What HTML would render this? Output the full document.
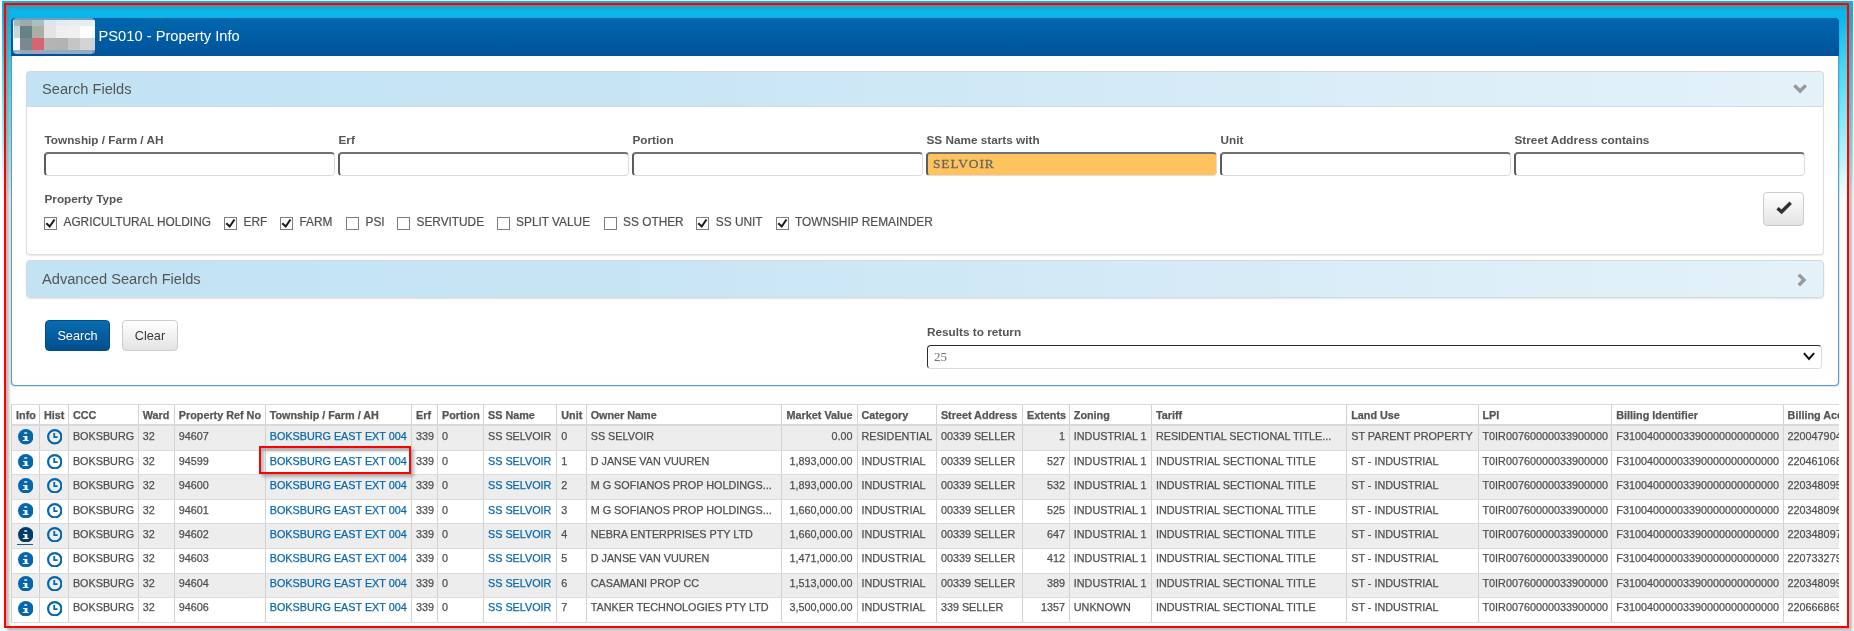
<!DOCTYPE html>
<html lang="en">
<head>
<meta charset="utf-8">
<title>PS010 - Property Info</title>
<style>
*{box-sizing:border-box}
html,body{margin:0;padding:0}
body{width:1854px;height:631px;overflow:hidden;background:#fff;position:relative;
 font-family:"Liberation Sans",Arial,sans-serif;font-size:11.72px;color:#4d4d4d}
.abs{position:absolute}
#root{position:absolute;left:0;top:0;width:1854px;height:631px;overflow:hidden;will-change:transform}
#bg{left:2px;top:1px;width:1851px;height:200px;
 background:linear-gradient(to bottom,#06b4e9 0px,#0cb8ea 17px,#40d4f0 60px,#5ae3f3 85px,#b5f2fa 155px,#fff 199px)}
.frame{border:2px solid #ff0000;box-shadow:3px 3px 3px rgba(120,120,120,.52),inset 3px 3px 3px rgba(120,120,120,.52);pointer-events:none}
#frame{left:4px;top:3px;width:1845px;height:625px;z-index:50}
#hl{left:259px;top:446px;width:152px;height:28px;z-index:51}
#main{left:11px;top:18px;width:1828px;height:368px;background:#fff;border:1px solid #5b9bcb;border-radius:4px;
 box-shadow:0 0 1.5px rgba(60,130,190,.9)}
#hdr{left:11px;top:18px;width:1828px;height:38px;border-radius:4px 4px 0 0;
 background:linear-gradient(to bottom,#0068ad 0%,#005fa6 45%,#00539a 100%)}
#logo{left:13px;top:18px;width:82px;height:36px;border-radius:4px;overflow:hidden}
#logo i{position:absolute;display:block}
#title{left:98.5px;top:17px;height:38px;line-height:38px;color:#fff;font-size:14.7px;white-space:nowrap}
.ph{left:26px;width:1798px;height:36px;border:1px solid #d3d9dd;border-radius:4px 4px 0 0;
 background:linear-gradient(to right,#c2e3f4 0%,#c8e5f5 35%,#d6ebf7 65%,#e4f2f9 100%);box-shadow:0 0 1px rgba(0,0,0,.12)}
.ph span{position:absolute;left:15px;top:0;line-height:35px;font-size:14.65px;color:#555;white-space:nowrap}
.ph svg{position:absolute}
#pb1{left:26px;top:107px;width:1798px;height:148px;border:1px solid #dedede;border-top:0;border-radius:0 0 4px 4px;
 background:#fff;box-shadow:0 1px 1px rgba(0,0,0,.08)}
.lbl{font-weight:bold;font-size:11.78px;color:#555;white-space:nowrap;line-height:14px}
.inp{height:24px;width:291px;border-style:solid;border-width:2px 1px 1px 2px;border-color:#727272 #e2d9d9 #e2dada #5c5c5c;border-radius:4px;background:#fff}
.inp.sel{background:#fec25f}
.inp.sel span{position:absolute;left:5px;top:0;line-height:20px;font-family:"Liberation Serif","Times New Roman",serif;font-size:13.4px;letter-spacing:.9px;color:#6a665e;-webkit-text-stroke:.3px}
.cb{width:13px;height:13px;border:1px solid #7d7d7d;background:#fff}
.cb svg{position:absolute;left:-1px;top:-1px;width:13px;height:13px}
.cbl{font-size:11.85px;color:#505050;-webkit-text-stroke:.2px;white-space:nowrap;line-height:14px}
.btn{border-radius:4px;text-align:center;font-size:12.7px;white-space:nowrap}
#bsearch{left:45px;top:320px;width:65px;height:31px;line-height:30px;color:#fff;text-shadow:0 -1px 0 rgba(0,0,0,.2);border:1px solid #004a86;
 background:linear-gradient(to bottom,#0a6cb0 0%,#004f8f 100%)}
#bclear{left:122px;top:320px;width:56px;height:31px;line-height:30px;color:#3a3a3a;border:1px solid #ccc;
 background:linear-gradient(to bottom,#fff 0%,#e3e3e3 100%)}
#bcheck{left:1763px;top:192px;width:41px;height:34px;border:1px solid #ccc;background:linear-gradient(to bottom,#fff 0%,#e3e3e3 100%)}
#selr{left:927px;top:345px;width:895px;height:24px;border:1px solid;border-color:#2a2a2a #e2d9d9 #e2dada #2a2a2a;border-radius:4px;background:#fff}
#selr span{position:absolute;left:6px;top:0;line-height:22px;font-family:"Liberation Serif","Times New Roman",serif;font-size:13px;color:#707070}
/* table */
#tbl{left:11px;top:404px;width:1828px;height:222px;overflow:hidden;font-size:10.8px;color:#505050;-webkit-text-stroke:.25px}
.tr{position:absolute;left:0;width:1900px;border-top:1px solid #dcdcdc;background:#fff;line-height:19.5px}
.tr.odd{background:#ededed}
.tr.first{border-top:2px solid #d9d9d9;line-height:21.5px}
.tr.th{font-weight:bold;color:#555;line-height:20.4px}
.c{position:absolute;top:0;height:100%;border-left:1px solid #d2d2d2;white-space:nowrap;overflow:hidden}
.c.r{text-align:right}
.c.i{padding:0 !important}
.c a{color:#0a69b0}
.ic{position:absolute;top:2.75px;width:15.5px;height:15.5px}
.first .ic{top:3.1px}
.hov{position:absolute;left:50%;margin-left:-8.7px;width:16px;top:20px;height:1px;background:#2a587d}
#tblend{left:11px;top:622px;width:1828px;height:1px;background:#dcdcdc}
</style>
</head>
<body>
<div id="root">
<div id="bg" class="abs"></div>
<div id="main" class="abs"></div>
<div id="hdr" class="abs"></div>
<div id="logo" class="abs">
<i style="left:0px;top:0px;width:1px;height:2px;background:#7fa9cc"></i>
<i style="left:1px;top:0px;width:6px;height:2px;background:#6c9fc8"></i>
<i style="left:7px;top:0px;width:12px;height:2px;background:#6c9fc8"></i>
<i style="left:19px;top:0px;width:12px;height:2px;background:#6c9fc8"></i>
<i style="left:31px;top:0px;width:12px;height:2px;background:#6c9fc8"></i>
<i style="left:43px;top:0px;width:12px;height:2px;background:#6c9fc8"></i>
<i style="left:55px;top:0px;width:12px;height:2px;background:#6c9fc8"></i>
<i style="left:67px;top:0px;width:12px;height:2px;background:#6c9fc8"></i>
<i style="left:79px;top:0px;width:3px;height:2px;background:#5f95c2"></i>
<i style="left:0px;top:2px;width:1px;height:6px;background:#e9efef"></i>
<i style="left:1px;top:2px;width:6px;height:6px;background:#a0bdb9"></i>
<i style="left:7px;top:2px;width:12px;height:6px;background:#9fa9ae"></i>
<i style="left:19px;top:2px;width:12px;height:6px;background:#a9c1bd"></i>
<i style="left:31px;top:2px;width:12px;height:6px;background:#dae6ee"></i>
<i style="left:43px;top:2px;width:12px;height:6px;background:#e4ecf3"></i>
<i style="left:55px;top:2px;width:12px;height:6px;background:#e6eef4"></i>
<i style="left:67px;top:2px;width:12px;height:6px;background:#e6eef4"></i>
<i style="left:79px;top:2px;width:3px;height:6px;background:#e9eff6"></i>
<i style="left:0px;top:8px;width:1px;height:12px;background:#f4f6f6"></i>
<i style="left:1px;top:8px;width:6px;height:12px;background:#cad7d8"></i>
<i style="left:7px;top:8px;width:12px;height:12px;background:#688186"></i>
<i style="left:19px;top:8px;width:12px;height:12px;background:#aaaea4"></i>
<i style="left:31px;top:8px;width:12px;height:12px;background:#e4e4e4"></i>
<i style="left:43px;top:8px;width:12px;height:12px;background:#efefef"></i>
<i style="left:55px;top:8px;width:12px;height:12px;background:#f0f0f0"></i>
<i style="left:67px;top:8px;width:12px;height:12px;background:#fefefe"></i>
<i style="left:79px;top:8px;width:3px;height:12px;background:#f8f9fc"></i>
<i style="left:0px;top:20px;width:1px;height:12px;background:#fbfcfd"></i>
<i style="left:1px;top:20px;width:6px;height:12px;background:#f8f9fc"></i>
<i style="left:7px;top:20px;width:12px;height:12px;background:#788990"></i>
<i style="left:19px;top:20px;width:12px;height:12px;background:#d36672"></i>
<i style="left:31px;top:20px;width:12px;height:12px;background:#b4b4b4"></i>
<i style="left:43px;top:20px;width:12px;height:12px;background:#b3b3b3"></i>
<i style="left:55px;top:20px;width:12px;height:12px;background:#c5c5c5"></i>
<i style="left:67px;top:20px;width:12px;height:12px;background:#d4d4d4"></i>
<i style="left:79px;top:20px;width:3px;height:12px;background:#cdd3d8"></i>
<i style="left:0px;top:32px;width:1px;height:4px;background:#9fb4c6"></i>
<i style="left:1px;top:32px;width:6px;height:4px;background:#a3b7c8"></i>
<i style="left:7px;top:32px;width:12px;height:4px;background:#94a9b8"></i>
<i style="left:19px;top:32px;width:12px;height:4px;background:#a7a4b4"></i>
<i style="left:31px;top:32px;width:12px;height:4px;background:#94acc0"></i>
<i style="left:43px;top:32px;width:12px;height:4px;background:#94acc0"></i>
<i style="left:55px;top:32px;width:12px;height:4px;background:#94acc0"></i>
<i style="left:67px;top:32px;width:12px;height:4px;background:#94acc0"></i>
<i style="left:79px;top:32px;width:3px;height:4px;background:#7fa0bf"></i>
</div>
<div id="title" class="abs">PS010 - Property Info</div>

<div class="abs ph" style="top:71px"><span>Search Fields</span>
<svg style="left:-1px;top:-1px" width="1798" height="37" viewBox="0 0 1798 37"><path d="M1768.4 14.4L1774.1 20L1779.8 14.4" fill="none" stroke="#999" stroke-width="3.4"/></svg></div>
<div id="pb1" class="abs"></div>
<div class="abs ph" style="top:260px;height:38px;border-radius:4px;box-shadow:0 1px 2px rgba(0,0,0,.12)"><span style="line-height:37px">Advanced Search Fields</span>
<svg style="left:-1px;top:-1px" width="1798" height="37" viewBox="0 0 1798 37"><path d="M1772.8 14.6L1778 19.9L1772.8 25.2" fill="none" stroke="#999" stroke-width="3.4"/></svg></div>

<div class="abs lbl" style="left:44.5px;top:133px">Township / Farm / AH</div>
<div class="abs inp" style="left:44px;top:152px"></div>
<div class="abs lbl" style="left:338.5px;top:133px">Erf</div>
<div class="abs inp" style="left:338px;top:152px"></div>
<div class="abs lbl" style="left:632.5px;top:133px">Portion</div>
<div class="abs inp" style="left:632px;top:152px"></div>
<div class="abs lbl" style="left:926.5px;top:133px">SS Name starts with</div>
<div class="abs inp sel" style="left:926px;top:152px"><span>SELVOIR</span></div>
<div class="abs lbl" style="left:1220.5px;top:133px">Unit</div>
<div class="abs inp" style="left:1220px;top:152px"></div>
<div class="abs lbl" style="left:1514.5px;top:133px">Street Address contains</div>
<div class="abs inp" style="left:1514px;top:152px"></div>
<div class="abs lbl" style="left:44.5px;top:192px">Property Type</div>
<div class="abs cb" style="left:44px;top:217px"><svg viewBox="0 0 13 13"><path d="M2.3 6.2L5.7 9.5L10.5 2.5" fill="none" stroke="#1c1c1c" stroke-width="2.1"/></svg></div><div class="abs cbl" style="left:63.5px;top:215px">AGRICULTURAL HOLDING</div>
<div class="abs cb" style="left:224px;top:217px"><svg viewBox="0 0 13 13"><path d="M2.3 6.2L5.7 9.5L10.5 2.5" fill="none" stroke="#1c1c1c" stroke-width="2.1"/></svg></div><div class="abs cbl" style="left:243.5px;top:215px">ERF</div>
<div class="abs cb" style="left:280px;top:217px"><svg viewBox="0 0 13 13"><path d="M2.3 6.2L5.7 9.5L10.5 2.5" fill="none" stroke="#1c1c1c" stroke-width="2.1"/></svg></div><div class="abs cbl" style="left:299.5px;top:215px">FARM</div>
<div class="abs cb" style="left:346px;top:217px"></div><div class="abs cbl" style="left:365.5px;top:215px">PSI</div>
<div class="abs cb" style="left:397px;top:217px"></div><div class="abs cbl" style="left:416.5px;top:215px">SERVITUDE</div>
<div class="abs cb" style="left:496.6px;top:217px"></div><div class="abs cbl" style="left:516.1px;top:215px">SPLIT VALUE</div>
<div class="abs cb" style="left:603.6px;top:217px"></div><div class="abs cbl" style="left:623.1px;top:215px">SS OTHER</div>
<div class="abs cb" style="left:696.3px;top:217px"><svg viewBox="0 0 13 13"><path d="M2.3 6.2L5.7 9.5L10.5 2.5" fill="none" stroke="#1c1c1c" stroke-width="2.1"/></svg></div><div class="abs cbl" style="left:715.8px;top:215px">SS UNIT</div>
<div class="abs cb" style="left:775.5px;top:217px"><svg viewBox="0 0 13 13"><path d="M2.3 6.2L5.7 9.5L10.5 2.5" fill="none" stroke="#1c1c1c" stroke-width="2.1"/></svg></div><div class="abs cbl" style="left:795.0px;top:215px">TOWNSHIP REMAINDER</div>
<div id="bcheck" class="abs btn"><svg style="position:absolute;left:-1px;top:-1px" width="41" height="33" viewBox="0 0 41 33"><path d="M14.5 16.2L18.6 19.8L27.7 10.7" fill="none" stroke="#303030" stroke-width="3.4"/></svg></div>

<div id="bsearch" class="abs btn">Search</div>
<div id="bclear" class="abs btn">Clear</div>
<div class="abs lbl" style="left:927px;top:325px">Results to return</div>
<div id="selr" class="abs"><span>25</span>
<svg style="position:absolute;right:6.5px;top:6.3px" width="12" height="9" viewBox="0 0 12 9"><path d="M0.9 1.2L6 7L11.1 1.2" fill="none" stroke="#111" stroke-width="2"/></svg></div>

<div id="tbl" class="abs">
<div class="tr th" style="top:0px;height:20px">
<div class="c" style="left:0px;width:28px;padding-left:4.1px;padding-right:3.8px">Info</div>
<div class="c" style="left:28px;width:29px;padding-left:4.0px;padding-right:3.9px">Hist</div>
<div class="c" style="left:57px;width:70px;padding-left:3.9px;padding-right:4.0px">CCC</div>
<div class="c" style="left:127px;width:36px;padding-left:3.8px;padding-right:4.0px">Ward</div>
<div class="c" style="left:163px;width:91px;padding-left:3.8px;padding-right:4.1px">Property Ref No</div>
<div class="c" style="left:254px;width:146px;padding-left:3.7px;padding-right:3.7px">Township / Farm / AH</div>
<div class="c" style="left:400px;width:26px;padding-left:4.1px;padding-right:3.8px">Erf</div>
<div class="c" style="left:426px;width:46px;padding-left:4.0px;padding-right:3.8px">Portion</div>
<div class="c" style="left:472px;width:73px;padding-left:4.0px;padding-right:3.5px">SS Name</div>
<div class="c" style="left:545px;width:30px;padding-left:4.3px;padding-right:4.1px">Unit</div>
<div class="c" style="left:575px;width:195px;padding-left:3.7px;padding-right:3.8px">Owner Name</div>
<div class="c r" style="left:770px;width:76px;padding-left:4.0px;padding-right:4.4px">Market Value</div>
<div class="c" style="left:846px;width:79px;padding-left:3.4px;padding-right:3.9px">Category</div>
<div class="c" style="left:925px;width:86px;padding-left:3.9px;padding-right:3.8px">Street Address</div>
<div class="c r" style="left:1011px;width:47px;padding-left:4.0px;padding-right:4.0px">Extents</div>
<div class="c" style="left:1058px;width:82px;padding-left:3.8px;padding-right:3.9px">Zoning</div>
<div class="c" style="left:1140px;width:195px;padding-left:3.9px;padding-right:3.6px">Tariff</div>
<div class="c" style="left:1335px;width:132px;padding-left:4.2px;padding-right:4.3px">Land Use</div>
<div class="c" style="left:1467px;width:133px;padding-left:3.5px;padding-right:3.5px">LPI</div>
<div class="c" style="left:1600px;width:172px;padding-left:4.3px;padding-right:4.2px">Billing Identifier</div>
<div class="c" style="left:1772px;width:117px;padding-left:3.6px;padding-right:3.9px">Billing Account</div>
</div>
<div class="tr odd first" style="top:20px;height:26px">
<div class="c i" style="left:0px;width:28px;padding-left:4.1px;padding-right:3.8px"><svg class="ic" style="left:5.800000000000001px" viewBox="0 0 15.5 15.5"><circle cx="7.75" cy="7.75" r="7.75" fill="#0566ad"/><rect x="6.2" y="3.3" width="3.0" height="1.5" rx=".4" fill="#fff" fill-opacity=".92"/><path d="M5.0 7.0H9.4V11H10.6V12.1H4.7V11H6.6V8.1H5.0z" fill="#fff" fill-opacity=".95"/></svg></div>
<div class="c i" style="left:28px;width:29px;padding-left:4.0px;padding-right:3.9px"><svg class="ic" style="left:6.5px" viewBox="0 0 15.5 15.5"><circle cx="7.75" cy="7.75" r="6.65" fill="none" stroke="#0566ad" stroke-width="2.2"/><path d="M7.25 4.1V8.1H10.6" fill="none" stroke="#0566ad" stroke-width="1.8"/></svg></div>
<div class="c" style="left:57px;width:70px;padding-left:3.9px;padding-right:4.0px">BOKSBURG</div>
<div class="c" style="left:127px;width:36px;padding-left:3.8px;padding-right:4.0px">32</div>
<div class="c" style="left:163px;width:91px;padding-left:3.8px;padding-right:4.1px">94607</div>
<div class="c" style="left:254px;width:146px;padding-left:3.7px;padding-right:3.7px"><a>BOKSBURG EAST EXT 004</a></div>
<div class="c" style="left:400px;width:26px;padding-left:4.1px;padding-right:3.8px">339</div>
<div class="c" style="left:426px;width:46px;padding-left:4.0px;padding-right:3.8px">0</div>
<div class="c" style="left:472px;width:73px;padding-left:4.0px;padding-right:3.5px">SS SELVOIR</div>
<div class="c" style="left:545px;width:30px;padding-left:4.3px;padding-right:4.1px">0</div>
<div class="c" style="left:575px;width:195px;padding-left:3.7px;padding-right:3.8px">SS SELVOIR</div>
<div class="c r" style="left:770px;width:76px;padding-left:4.0px;padding-right:4.4px">0.00</div>
<div class="c" style="left:846px;width:79px;padding-left:3.4px;padding-right:3.9px">RESIDENTIAL</div>
<div class="c" style="left:925px;width:86px;padding-left:3.9px;padding-right:3.8px">00339 SELLER</div>
<div class="c r" style="left:1011px;width:47px;padding-left:4.0px;padding-right:4.0px">1</div>
<div class="c" style="left:1058px;width:82px;padding-left:3.8px;padding-right:3.9px">INDUSTRIAL 1</div>
<div class="c" style="left:1140px;width:195px;padding-left:3.9px;padding-right:3.6px">RESIDENTIAL SECTIONAL TITLE...</div>
<div class="c" style="left:1335px;width:132px;padding-left:4.2px;padding-right:4.3px">ST PARENT PROPERTY</div>
<div class="c" style="left:1467px;width:133px;padding-left:3.5px;padding-right:3.5px">T0IR00760000033900000</div>
<div class="c" style="left:1600px;width:172px;padding-left:4.3px;padding-right:4.2px">F31004000003390000000000000</div>
<div class="c" style="left:1772px;width:117px;padding-left:3.6px;padding-right:3.9px">2200479040</div>
</div>
<div class="tr" style="top:46px;height:24px;line-height:20.5px">
<div class="c i" style="left:0px;width:28px;padding-left:4.1px;padding-right:3.8px"><svg class="ic" style="left:5.800000000000001px" viewBox="0 0 15.5 15.5"><circle cx="7.75" cy="7.75" r="7.75" fill="#0566ad"/><rect x="6.2" y="3.3" width="3.0" height="1.5" rx=".4" fill="#fff" fill-opacity=".92"/><path d="M5.0 7.0H9.4V11H10.6V12.1H4.7V11H6.6V8.1H5.0z" fill="#fff" fill-opacity=".95"/></svg></div>
<div class="c i" style="left:28px;width:29px;padding-left:4.0px;padding-right:3.9px"><svg class="ic" style="left:6.5px" viewBox="0 0 15.5 15.5"><circle cx="7.75" cy="7.75" r="6.65" fill="none" stroke="#0566ad" stroke-width="2.2"/><path d="M7.25 4.1V8.1H10.6" fill="none" stroke="#0566ad" stroke-width="1.8"/></svg></div>
<div class="c" style="left:57px;width:70px;padding-left:3.9px;padding-right:4.0px">BOKSBURG</div>
<div class="c" style="left:127px;width:36px;padding-left:3.8px;padding-right:4.0px">32</div>
<div class="c" style="left:163px;width:91px;padding-left:3.8px;padding-right:4.1px">94599</div>
<div class="c" style="left:254px;width:146px;padding-left:3.7px;padding-right:3.7px"><a>BOKSBURG EAST EXT 004</a></div>
<div class="c" style="left:400px;width:26px;padding-left:4.1px;padding-right:3.8px">339</div>
<div class="c" style="left:426px;width:46px;padding-left:4.0px;padding-right:3.8px">0</div>
<div class="c" style="left:472px;width:73px;padding-left:4.0px;padding-right:3.5px"><a>SS SELVOIR</a></div>
<div class="c" style="left:545px;width:30px;padding-left:4.3px;padding-right:4.1px">1</div>
<div class="c" style="left:575px;width:195px;padding-left:3.7px;padding-right:3.8px">D JANSE VAN VUUREN</div>
<div class="c r" style="left:770px;width:76px;padding-left:4.0px;padding-right:4.4px">1,893,000.00</div>
<div class="c" style="left:846px;width:79px;padding-left:3.4px;padding-right:3.9px">INDUSTRIAL</div>
<div class="c" style="left:925px;width:86px;padding-left:3.9px;padding-right:3.8px">00339 SELLER</div>
<div class="c r" style="left:1011px;width:47px;padding-left:4.0px;padding-right:4.0px">527</div>
<div class="c" style="left:1058px;width:82px;padding-left:3.8px;padding-right:3.9px">INDUSTRIAL 1</div>
<div class="c" style="left:1140px;width:195px;padding-left:3.9px;padding-right:3.6px">INDUSTRIAL SECTIONAL TITLE</div>
<div class="c" style="left:1335px;width:132px;padding-left:4.2px;padding-right:4.3px">ST - INDUSTRIAL</div>
<div class="c" style="left:1467px;width:133px;padding-left:3.5px;padding-right:3.5px">T0IR00760000033900000</div>
<div class="c" style="left:1600px;width:172px;padding-left:4.3px;padding-right:4.2px">F31004000003390000000000000</div>
<div class="c" style="left:1772px;width:117px;padding-left:3.6px;padding-right:3.9px">2204610680</div>
</div>
<div class="tr odd" style="top:70px;height:25px;line-height:20.5px">
<div class="c i" style="left:0px;width:28px;padding-left:4.1px;padding-right:3.8px"><svg class="ic" style="left:5.800000000000001px" viewBox="0 0 15.5 15.5"><circle cx="7.75" cy="7.75" r="7.75" fill="#0566ad"/><rect x="6.2" y="3.3" width="3.0" height="1.5" rx=".4" fill="#fff" fill-opacity=".92"/><path d="M5.0 7.0H9.4V11H10.6V12.1H4.7V11H6.6V8.1H5.0z" fill="#fff" fill-opacity=".95"/></svg></div>
<div class="c i" style="left:28px;width:29px;padding-left:4.0px;padding-right:3.9px"><svg class="ic" style="left:6.5px" viewBox="0 0 15.5 15.5"><circle cx="7.75" cy="7.75" r="6.65" fill="none" stroke="#0566ad" stroke-width="2.2"/><path d="M7.25 4.1V8.1H10.6" fill="none" stroke="#0566ad" stroke-width="1.8"/></svg></div>
<div class="c" style="left:57px;width:70px;padding-left:3.9px;padding-right:4.0px">BOKSBURG</div>
<div class="c" style="left:127px;width:36px;padding-left:3.8px;padding-right:4.0px">32</div>
<div class="c" style="left:163px;width:91px;padding-left:3.8px;padding-right:4.1px">94600</div>
<div class="c" style="left:254px;width:146px;padding-left:3.7px;padding-right:3.7px"><a>BOKSBURG EAST EXT 004</a></div>
<div class="c" style="left:400px;width:26px;padding-left:4.1px;padding-right:3.8px">339</div>
<div class="c" style="left:426px;width:46px;padding-left:4.0px;padding-right:3.8px">0</div>
<div class="c" style="left:472px;width:73px;padding-left:4.0px;padding-right:3.5px"><a>SS SELVOIR</a></div>
<div class="c" style="left:545px;width:30px;padding-left:4.3px;padding-right:4.1px">2</div>
<div class="c" style="left:575px;width:195px;padding-left:3.7px;padding-right:3.8px">M G SOFIANOS PROP HOLDINGS...</div>
<div class="c r" style="left:770px;width:76px;padding-left:4.0px;padding-right:4.4px">1,893,000.00</div>
<div class="c" style="left:846px;width:79px;padding-left:3.4px;padding-right:3.9px">INDUSTRIAL</div>
<div class="c" style="left:925px;width:86px;padding-left:3.9px;padding-right:3.8px">00339 SELLER</div>
<div class="c r" style="left:1011px;width:47px;padding-left:4.0px;padding-right:4.0px">532</div>
<div class="c" style="left:1058px;width:82px;padding-left:3.8px;padding-right:3.9px">INDUSTRIAL 1</div>
<div class="c" style="left:1140px;width:195px;padding-left:3.9px;padding-right:3.6px">INDUSTRIAL SECTIONAL TITLE</div>
<div class="c" style="left:1335px;width:132px;padding-left:4.2px;padding-right:4.3px">ST - INDUSTRIAL</div>
<div class="c" style="left:1467px;width:133px;padding-left:3.5px;padding-right:3.5px">T0IR00760000033900000</div>
<div class="c" style="left:1600px;width:172px;padding-left:4.3px;padding-right:4.2px">F31004000003390000000000000</div>
<div class="c" style="left:1772px;width:117px;padding-left:3.6px;padding-right:3.9px">2203480950</div>
</div>
<div class="tr" style="top:95px;height:24px;line-height:20.5px">
<div class="c i" style="left:0px;width:28px;padding-left:4.1px;padding-right:3.8px"><svg class="ic" style="left:5.800000000000001px" viewBox="0 0 15.5 15.5"><circle cx="7.75" cy="7.75" r="7.75" fill="#0566ad"/><rect x="6.2" y="3.3" width="3.0" height="1.5" rx=".4" fill="#fff" fill-opacity=".92"/><path d="M5.0 7.0H9.4V11H10.6V12.1H4.7V11H6.6V8.1H5.0z" fill="#fff" fill-opacity=".95"/></svg></div>
<div class="c i" style="left:28px;width:29px;padding-left:4.0px;padding-right:3.9px"><svg class="ic" style="left:6.5px" viewBox="0 0 15.5 15.5"><circle cx="7.75" cy="7.75" r="6.65" fill="none" stroke="#0566ad" stroke-width="2.2"/><path d="M7.25 4.1V8.1H10.6" fill="none" stroke="#0566ad" stroke-width="1.8"/></svg></div>
<div class="c" style="left:57px;width:70px;padding-left:3.9px;padding-right:4.0px">BOKSBURG</div>
<div class="c" style="left:127px;width:36px;padding-left:3.8px;padding-right:4.0px">32</div>
<div class="c" style="left:163px;width:91px;padding-left:3.8px;padding-right:4.1px">94601</div>
<div class="c" style="left:254px;width:146px;padding-left:3.7px;padding-right:3.7px"><a>BOKSBURG EAST EXT 004</a></div>
<div class="c" style="left:400px;width:26px;padding-left:4.1px;padding-right:3.8px">339</div>
<div class="c" style="left:426px;width:46px;padding-left:4.0px;padding-right:3.8px">0</div>
<div class="c" style="left:472px;width:73px;padding-left:4.0px;padding-right:3.5px"><a>SS SELVOIR</a></div>
<div class="c" style="left:545px;width:30px;padding-left:4.3px;padding-right:4.1px">3</div>
<div class="c" style="left:575px;width:195px;padding-left:3.7px;padding-right:3.8px">M G SOFIANOS PROP HOLDINGS...</div>
<div class="c r" style="left:770px;width:76px;padding-left:4.0px;padding-right:4.4px">1,660,000.00</div>
<div class="c" style="left:846px;width:79px;padding-left:3.4px;padding-right:3.9px">INDUSTRIAL</div>
<div class="c" style="left:925px;width:86px;padding-left:3.9px;padding-right:3.8px">00339 SELLER</div>
<div class="c r" style="left:1011px;width:47px;padding-left:4.0px;padding-right:4.0px">525</div>
<div class="c" style="left:1058px;width:82px;padding-left:3.8px;padding-right:3.9px">INDUSTRIAL 1</div>
<div class="c" style="left:1140px;width:195px;padding-left:3.9px;padding-right:3.6px">INDUSTRIAL SECTIONAL TITLE</div>
<div class="c" style="left:1335px;width:132px;padding-left:4.2px;padding-right:4.3px">ST - INDUSTRIAL</div>
<div class="c" style="left:1467px;width:133px;padding-left:3.5px;padding-right:3.5px">T0IR00760000033900000</div>
<div class="c" style="left:1600px;width:172px;padding-left:4.3px;padding-right:4.2px">F31004000003390000000000000</div>
<div class="c" style="left:1772px;width:117px;padding-left:3.6px;padding-right:3.9px">2203480960</div>
</div>
<div class="tr odd" style="top:119px;height:25px;line-height:20.5px">
<div class="c i" style="left:0px;width:28px;padding-left:4.1px;padding-right:3.8px"><svg class="ic" style="left:5.800000000000001px" viewBox="0 0 15.5 15.5"><circle cx="7.75" cy="7.75" r="7.75" fill="#043b66"/><rect x="6.2" y="3.3" width="3.0" height="1.5" rx=".4" fill="#fff" fill-opacity=".92"/><path d="M5.0 7.0H9.4V11H10.6V12.1H4.7V11H6.6V8.1H5.0z" fill="#fff" fill-opacity=".95"/></svg><span class="hov"></span></div>
<div class="c i" style="left:28px;width:29px;padding-left:4.0px;padding-right:3.9px"><svg class="ic" style="left:6.5px" viewBox="0 0 15.5 15.5"><circle cx="7.75" cy="7.75" r="6.65" fill="none" stroke="#0566ad" stroke-width="2.2"/><path d="M7.25 4.1V8.1H10.6" fill="none" stroke="#0566ad" stroke-width="1.8"/></svg></div>
<div class="c" style="left:57px;width:70px;padding-left:3.9px;padding-right:4.0px">BOKSBURG</div>
<div class="c" style="left:127px;width:36px;padding-left:3.8px;padding-right:4.0px">32</div>
<div class="c" style="left:163px;width:91px;padding-left:3.8px;padding-right:4.1px">94602</div>
<div class="c" style="left:254px;width:146px;padding-left:3.7px;padding-right:3.7px"><a>BOKSBURG EAST EXT 004</a></div>
<div class="c" style="left:400px;width:26px;padding-left:4.1px;padding-right:3.8px">339</div>
<div class="c" style="left:426px;width:46px;padding-left:4.0px;padding-right:3.8px">0</div>
<div class="c" style="left:472px;width:73px;padding-left:4.0px;padding-right:3.5px"><a>SS SELVOIR</a></div>
<div class="c" style="left:545px;width:30px;padding-left:4.3px;padding-right:4.1px">4</div>
<div class="c" style="left:575px;width:195px;padding-left:3.7px;padding-right:3.8px">NEBRA ENTERPRISES PTY LTD</div>
<div class="c r" style="left:770px;width:76px;padding-left:4.0px;padding-right:4.4px">1,660,000.00</div>
<div class="c" style="left:846px;width:79px;padding-left:3.4px;padding-right:3.9px">INDUSTRIAL</div>
<div class="c" style="left:925px;width:86px;padding-left:3.9px;padding-right:3.8px">00339 SELLER</div>
<div class="c r" style="left:1011px;width:47px;padding-left:4.0px;padding-right:4.0px">647</div>
<div class="c" style="left:1058px;width:82px;padding-left:3.8px;padding-right:3.9px">INDUSTRIAL 1</div>
<div class="c" style="left:1140px;width:195px;padding-left:3.9px;padding-right:3.6px">INDUSTRIAL SECTIONAL TITLE</div>
<div class="c" style="left:1335px;width:132px;padding-left:4.2px;padding-right:4.3px">ST - INDUSTRIAL</div>
<div class="c" style="left:1467px;width:133px;padding-left:3.5px;padding-right:3.5px">T0IR00760000033900000</div>
<div class="c" style="left:1600px;width:172px;padding-left:4.3px;padding-right:4.2px">F31004000003390000000000000</div>
<div class="c" style="left:1772px;width:117px;padding-left:3.6px;padding-right:3.9px">2203480970</div>
</div>
<div class="tr" style="top:144px;height:25px;line-height:19.5px">
<div class="c i" style="left:0px;width:28px;padding-left:4.1px;padding-right:3.8px"><svg class="ic" style="left:5.800000000000001px" viewBox="0 0 15.5 15.5"><circle cx="7.75" cy="7.75" r="7.75" fill="#0566ad"/><rect x="6.2" y="3.3" width="3.0" height="1.5" rx=".4" fill="#fff" fill-opacity=".92"/><path d="M5.0 7.0H9.4V11H10.6V12.1H4.7V11H6.6V8.1H5.0z" fill="#fff" fill-opacity=".95"/></svg></div>
<div class="c i" style="left:28px;width:29px;padding-left:4.0px;padding-right:3.9px"><svg class="ic" style="left:6.5px" viewBox="0 0 15.5 15.5"><circle cx="7.75" cy="7.75" r="6.65" fill="none" stroke="#0566ad" stroke-width="2.2"/><path d="M7.25 4.1V8.1H10.6" fill="none" stroke="#0566ad" stroke-width="1.8"/></svg></div>
<div class="c" style="left:57px;width:70px;padding-left:3.9px;padding-right:4.0px">BOKSBURG</div>
<div class="c" style="left:127px;width:36px;padding-left:3.8px;padding-right:4.0px">32</div>
<div class="c" style="left:163px;width:91px;padding-left:3.8px;padding-right:4.1px">94603</div>
<div class="c" style="left:254px;width:146px;padding-left:3.7px;padding-right:3.7px"><a>BOKSBURG EAST EXT 004</a></div>
<div class="c" style="left:400px;width:26px;padding-left:4.1px;padding-right:3.8px">339</div>
<div class="c" style="left:426px;width:46px;padding-left:4.0px;padding-right:3.8px">0</div>
<div class="c" style="left:472px;width:73px;padding-left:4.0px;padding-right:3.5px"><a>SS SELVOIR</a></div>
<div class="c" style="left:545px;width:30px;padding-left:4.3px;padding-right:4.1px">5</div>
<div class="c" style="left:575px;width:195px;padding-left:3.7px;padding-right:3.8px">D JANSE VAN VUUREN</div>
<div class="c r" style="left:770px;width:76px;padding-left:4.0px;padding-right:4.4px">1,471,000.00</div>
<div class="c" style="left:846px;width:79px;padding-left:3.4px;padding-right:3.9px">INDUSTRIAL</div>
<div class="c" style="left:925px;width:86px;padding-left:3.9px;padding-right:3.8px">00339 SELLER</div>
<div class="c r" style="left:1011px;width:47px;padding-left:4.0px;padding-right:4.0px">412</div>
<div class="c" style="left:1058px;width:82px;padding-left:3.8px;padding-right:3.9px">INDUSTRIAL 1</div>
<div class="c" style="left:1140px;width:195px;padding-left:3.9px;padding-right:3.6px">INDUSTRIAL SECTIONAL TITLE</div>
<div class="c" style="left:1335px;width:132px;padding-left:4.2px;padding-right:4.3px">ST - INDUSTRIAL</div>
<div class="c" style="left:1467px;width:133px;padding-left:3.5px;padding-right:3.5px">T0IR00760000033900000</div>
<div class="c" style="left:1600px;width:172px;padding-left:4.3px;padding-right:4.2px">F31004000003390000000000000</div>
<div class="c" style="left:1772px;width:117px;padding-left:3.6px;padding-right:3.9px">2207332790</div>
</div>
<div class="tr odd" style="top:169px;height:24px;line-height:19.5px">
<div class="c i" style="left:0px;width:28px;padding-left:4.1px;padding-right:3.8px"><svg class="ic" style="left:5.800000000000001px;top:1.75px" viewBox="0 0 15.5 15.5"><circle cx="7.75" cy="7.75" r="7.75" fill="#0566ad"/><rect x="6.2" y="3.3" width="3.0" height="1.5" rx=".4" fill="#fff" fill-opacity=".92"/><path d="M5.0 7.0H9.4V11H10.6V12.1H4.7V11H6.6V8.1H5.0z" fill="#fff" fill-opacity=".95"/></svg></div>
<div class="c i" style="left:28px;width:29px;padding-left:4.0px;padding-right:3.9px"><svg class="ic" style="left:6.5px;top:1.75px" viewBox="0 0 15.5 15.5"><circle cx="7.75" cy="7.75" r="6.65" fill="none" stroke="#0566ad" stroke-width="2.2"/><path d="M7.25 4.1V8.1H10.6" fill="none" stroke="#0566ad" stroke-width="1.8"/></svg></div>
<div class="c" style="left:57px;width:70px;padding-left:3.9px;padding-right:4.0px">BOKSBURG</div>
<div class="c" style="left:127px;width:36px;padding-left:3.8px;padding-right:4.0px">32</div>
<div class="c" style="left:163px;width:91px;padding-left:3.8px;padding-right:4.1px">94604</div>
<div class="c" style="left:254px;width:146px;padding-left:3.7px;padding-right:3.7px"><a>BOKSBURG EAST EXT 004</a></div>
<div class="c" style="left:400px;width:26px;padding-left:4.1px;padding-right:3.8px">339</div>
<div class="c" style="left:426px;width:46px;padding-left:4.0px;padding-right:3.8px">0</div>
<div class="c" style="left:472px;width:73px;padding-left:4.0px;padding-right:3.5px"><a>SS SELVOIR</a></div>
<div class="c" style="left:545px;width:30px;padding-left:4.3px;padding-right:4.1px">6</div>
<div class="c" style="left:575px;width:195px;padding-left:3.7px;padding-right:3.8px">CASAMANI PROP CC</div>
<div class="c r" style="left:770px;width:76px;padding-left:4.0px;padding-right:4.4px">1,513,000.00</div>
<div class="c" style="left:846px;width:79px;padding-left:3.4px;padding-right:3.9px">INDUSTRIAL</div>
<div class="c" style="left:925px;width:86px;padding-left:3.9px;padding-right:3.8px">00339 SELLER</div>
<div class="c r" style="left:1011px;width:47px;padding-left:4.0px;padding-right:4.0px">389</div>
<div class="c" style="left:1058px;width:82px;padding-left:3.8px;padding-right:3.9px">INDUSTRIAL 1</div>
<div class="c" style="left:1140px;width:195px;padding-left:3.9px;padding-right:3.6px">INDUSTRIAL SECTIONAL TITLE</div>
<div class="c" style="left:1335px;width:132px;padding-left:4.2px;padding-right:4.3px">ST - INDUSTRIAL</div>
<div class="c" style="left:1467px;width:133px;padding-left:3.5px;padding-right:3.5px">T0IR00760000033900000</div>
<div class="c" style="left:1600px;width:172px;padding-left:4.3px;padding-right:4.2px">F31004000003390000000000000</div>
<div class="c" style="left:1772px;width:117px;padding-left:3.6px;padding-right:3.9px">2203480990</div>
</div>
<div class="tr" style="top:193px;height:25px;line-height:19.5px">
<div class="c i" style="left:0px;width:28px;padding-left:4.1px;padding-right:3.8px"><svg class="ic" style="left:5.800000000000001px" viewBox="0 0 15.5 15.5"><circle cx="7.75" cy="7.75" r="7.75" fill="#0566ad"/><rect x="6.2" y="3.3" width="3.0" height="1.5" rx=".4" fill="#fff" fill-opacity=".92"/><path d="M5.0 7.0H9.4V11H10.6V12.1H4.7V11H6.6V8.1H5.0z" fill="#fff" fill-opacity=".95"/></svg></div>
<div class="c i" style="left:28px;width:29px;padding-left:4.0px;padding-right:3.9px"><svg class="ic" style="left:6.5px" viewBox="0 0 15.5 15.5"><circle cx="7.75" cy="7.75" r="6.65" fill="none" stroke="#0566ad" stroke-width="2.2"/><path d="M7.25 4.1V8.1H10.6" fill="none" stroke="#0566ad" stroke-width="1.8"/></svg></div>
<div class="c" style="left:57px;width:70px;padding-left:3.9px;padding-right:4.0px">BOKSBURG</div>
<div class="c" style="left:127px;width:36px;padding-left:3.8px;padding-right:4.0px">32</div>
<div class="c" style="left:163px;width:91px;padding-left:3.8px;padding-right:4.1px">94606</div>
<div class="c" style="left:254px;width:146px;padding-left:3.7px;padding-right:3.7px"><a>BOKSBURG EAST EXT 004</a></div>
<div class="c" style="left:400px;width:26px;padding-left:4.1px;padding-right:3.8px">339</div>
<div class="c" style="left:426px;width:46px;padding-left:4.0px;padding-right:3.8px">0</div>
<div class="c" style="left:472px;width:73px;padding-left:4.0px;padding-right:3.5px"><a>SS SELVOIR</a></div>
<div class="c" style="left:545px;width:30px;padding-left:4.3px;padding-right:4.1px">7</div>
<div class="c" style="left:575px;width:195px;padding-left:3.7px;padding-right:3.8px">TANKER TECHNOLOGIES PTY LTD</div>
<div class="c r" style="left:770px;width:76px;padding-left:4.0px;padding-right:4.4px">3,500,000.00</div>
<div class="c" style="left:846px;width:79px;padding-left:3.4px;padding-right:3.9px">INDUSTRIAL</div>
<div class="c" style="left:925px;width:86px;padding-left:3.9px;padding-right:3.8px">339 SELLER</div>
<div class="c r" style="left:1011px;width:47px;padding-left:4.0px;padding-right:4.0px">1357</div>
<div class="c" style="left:1058px;width:82px;padding-left:3.8px;padding-right:3.9px">UNKNOWN</div>
<div class="c" style="left:1140px;width:195px;padding-left:3.9px;padding-right:3.6px">INDUSTRIAL SECTIONAL TITLE</div>
<div class="c" style="left:1335px;width:132px;padding-left:4.2px;padding-right:4.3px">ST - INDUSTRIAL</div>
<div class="c" style="left:1467px;width:133px;padding-left:3.5px;padding-right:3.5px">T0IR00760000033900000</div>
<div class="c" style="left:1600px;width:172px;padding-left:4.3px;padding-right:4.2px">F31004000003390000000000000</div>
<div class="c" style="left:1772px;width:117px;padding-left:3.6px;padding-right:3.9px">2206668650</div>
</div>
</div>
<div id="tblend" class="abs"></div>

<div id="frame" class="abs frame"></div>
<div id="hl" class="abs frame"></div>
</div>
</body>
</html>
